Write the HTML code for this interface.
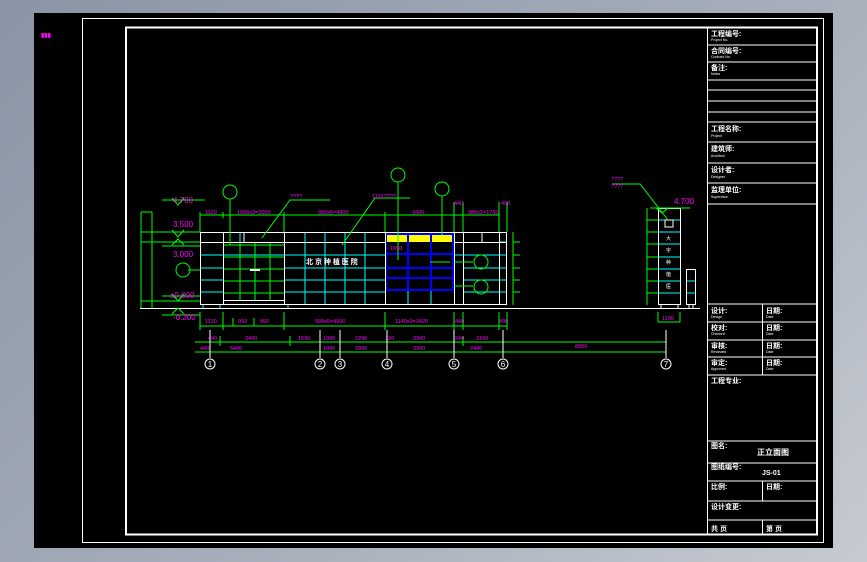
<!DOCTYPE html><html><head><meta charset="utf-8"><style>
html,body{margin:0;padding:0}
body{width:867px;height:562px;background:linear-gradient(135deg,#8a94a4,#a8b0bc 60%,#c6cad2);overflow:hidden}
svg{position:absolute;left:0;top:0}
text{font-family:"Liberation Sans","Noto Sans CJK SC",sans-serif}
</style></head><body>
<svg width="867" height="562" viewBox="0 0 867 562">
<rect x="34" y="13" width="799" height="535" fill="#000"/>
<rect x="82.5" y="18.5" width="741" height="524" fill="none" stroke="#fff" stroke-width="1"/>
<rect x="126" y="27.5" width="691" height="507" fill="none" stroke="#fff" stroke-width="2"/>
<text x="41" y="37" font-size="6" fill="#f0f" font-weight="bold">▮▮▮</text>
<!-- title block -->
<g stroke="#fff" stroke-width="1" fill="none">
<line x1="707.5" y1="27" x2="707.5" y2="534"/>
<path d="M707 45H817M707 62H817M707 80H817M707 90H817M707 101H817M707 112H817M707 122H817M707 142H817M707 163H817M707 183H817M707 204H817M707 304H817M707 322H817M707 340H817M707 357H817M707 375H817M707 441H817M707 463H817M707 481H817M707 501H817M707 520H817"/>
<path d="M762.5 304V375M762.5 481V501M762.5 520V534"/>
</g>
<g fill="#fff" font-size="7" font-weight="bold">
<text x="711" y="36">工程编号:</text><text x="711" y="53">合同编号:</text><text x="711" y="70">备注:</text>
<text x="711" y="131">工程名称:</text><text x="711" y="151">建筑师:</text><text x="711" y="172">设计者:</text><text x="711" y="192">监理单位:</text>
<text x="711" y="313">设计:</text><text x="766" y="313">日期:</text>
<text x="711" y="330">校对:</text><text x="766" y="330">日期:</text>
<text x="711" y="348">审核:</text><text x="766" y="348">日期:</text>
<text x="711" y="365">审定:</text><text x="766" y="365">日期:</text>
<text x="711" y="383">工程专业:</text>
<text x="711" y="448">图名:</text><text x="757" y="455" font-size="8">正立面图</text>
<text x="711" y="469">图纸编号:</text><text x="762" y="475">JS-01</text>
<text x="711" y="489">比例:</text><text x="766" y="489">日期:</text>
<text x="711" y="509">设计变更:</text>
<text x="711" y="531">共 页</text><text x="766" y="531">第 页</text>
</g>
<g fill="#fff" font-size="3.5">
<text x="711" y="41">Project No.</text><text x="711" y="58">Contract No.</text><text x="711" y="75">Notes</text>
<text x="711" y="137">Project</text><text x="711" y="157">Architect</text><text x="711" y="178">Designer</text><text x="711" y="198">Supervisor</text>
<text x="711" y="318">Design</text><text x="711" y="335">Checked</text><text x="711" y="353">Reviewed</text><text x="711" y="370">Approved</text>
<text x="766" y="318">Date</text><text x="766" y="335">Date</text><text x="766" y="353">Date</text><text x="766" y="370">Date</text>
</g>
<!-- ground -->
<line x1="140" y1="308.5" x2="700" y2="308.5" stroke="#fff"/>
<!-- main building -->
<g stroke="#0ff" stroke-width="1">
<path d="M305 232V305M325 232V305M345 232V305M365 232V305M408 290V305M431 290V305M200 255H284M200 268H223M200 280H223M200 292H223M284 255H385M284 268H385M284 280H385M284 292H385M454 255H507M463 268H507M463 280H507M463 292H507M499 242H507"/>
<path d="M240 242V232M203 305V308M220 305V308M288 305V308"/>
</g>
<g stroke="#0f0" stroke-width="1">
<path d="M223 245H284M223 257H284M223 269H284M223 281H284M223 293H284M240 242V300M255 242V300M270 242V300"/>
</g>
<rect x="385" y="233" width="69" height="9" fill="#ff0"/>
<g stroke="#00f" stroke-width="2" fill="none">
<rect x="386" y="234" width="67" height="56"/>
<path d="M408 234V290M431 234V290M386 254H453M386 268H453M386 278H453"/>
</g>
<g stroke="#fff" stroke-width="1" fill="none">
<rect x="200.5" y="232.5" width="306" height="72"/>
<path d="M223.5 232V305M284.5 232V305M385.5 232V305M454.5 232V305M463.5 232V305M499.5 232V305M200 242.5H385M454 242.5H507M244 232V242M482 232V242M223 300.5H284"/>
</g>
<text x="306" y="264" font-size="7" fill="#fff" font-weight="bold">北 京 种 植 医 院</text>
<rect x="250" y="269" width="10" height="2" fill="#fff"/>
<!-- right tower -->
<g stroke="#0ff"><path d="M658 220H680M658 232H680M658 244H680M658 257H680M658 269H680M658 281H680M658 293H680M686 281H695M686 293H695"/></g>
<g stroke="#fff" fill="none"><rect x="658.5" y="208.5" width="22" height="96"/><rect x="686.5" y="269.5" width="9" height="35"/><rect x="665" y="220" width="8" height="7"/><path d="M661 305V308M678 305V308M689 305V308M693 305V308"/></g>
<g fill="#fff" font-size="5"><text x="666" y="240">大</text><text x="666" y="252">宇</text><text x="666" y="264">种</text><text x="666" y="276">植</text><text x="666" y="288">医</text></g>
<!-- green dims -->
<g stroke="#0f0" stroke-width="1" fill="none">
<path d="M200 215H499M200 212V232M223 212V218M284 212V232M385 212V232M454 202V232M463 202V232M499 202V232M507 202V232"/>
<path d="M200 326H507M200 312V330M223 312V330M233 318V326M254 318V326M284 312V330M385 312V330M454 312V330M463 312V330M499 312V330M507 312V330M658 312V322M680 312V322M658 322H680"/>
<path d="M195 342H666M195 352H666M210 336V346M220 336V346M290 336V346M320 336V346M340 336V346M387 336V346M454 336V346M463 336V346M503 336V346"/>
<path d="M141 212V308M152 212V308M141 212H152M141 232H200M141 242H200M141 301H200M513 232V305M513 242H520M513 255H520M513 268H520M513 280H520M513 292H520M647 208V305M647 220H658M647 232H658M647 244H658M647 257H658M647 269H658M647 281H658M647 293H658"/>
<path d="M162 200H205M162 232H200M162 246H200M162 296H200M162 315H200M172 198L178 205L184 198M172 230L178 237L184 230M172 245L178 239L184 245M172 294L178 301L184 294M172 314L178 308L184 314M656 208L662 213L668 208M650 208H690"/>
<path d="M230 199V245M398 182V260M442 196V235M188 270H200M454 262H473M454 286H473M430 262H450M262 238L290 200H330M342 245L375 198H410M612 184H640L668 220"/>
</g>
<g stroke="#0f0" fill="none"><circle cx="230" cy="192" r="7"/><circle cx="398" cy="175" r="7"/><circle cx="442" cy="189" r="7"/><circle cx="183" cy="270" r="7"/><circle cx="481" cy="262" r="7"/><circle cx="481" cy="287" r="7"/></g>
<g fill="#f0f" font-size="8"><text x="173" y="203">4.700</text><text x="173" y="227">3.500</text><text x="173" y="257">3.000</text><text x="170" y="298">±0.000</text><text x="173" y="320">-0.200</text><text x="674" y="204">4.700</text></g>
<g fill="#f0f" font-size="5.5">
<text x="205" y="214">1120</text><text x="237" y="214">1000x3=3000</text><text x="318" y="214">980x5=4900</text><text x="412" y="214">3420</text><text x="468" y="214">980x2=1760</text><text x="454" y="205">440</text><text x="501" y="205">400</text>
<text x="205" y="323">1120</text><text x="238" y="323">992</text><text x="260" y="323">992</text><text x="315" y="323">980x5=4900</text><text x="395" y="323">1140x3=3420</text><text x="455" y="323">440</text><text x="499" y="323">400</text><text x="662" y="320">1100</text>
<text x="208" y="340">490</text><text x="245" y="340">3400</text><text x="298" y="340">1530</text><text x="323" y="340">1000</text><text x="355" y="340">2290</text><text x="385" y="340">120</text><text x="413" y="340">3300</text><text x="455" y="340">240</text><text x="476" y="340">2160</text><text x="575" y="348">8000</text>
<text x="200" y="350">440</text><text x="230" y="350">5400</text><text x="323" y="350">1000</text><text x="355" y="350">2300</text><text x="413" y="350">3300</text><text x="470" y="350">2400</text>
<text x="290" y="198">????</text><text x="372" y="198">1122????</text><text x="611" y="181">????</text><text x="611" y="188">????</text><text x="390" y="250">1050</text>
</g>
<g stroke="#fff" fill="none"><path d="M210 330V358M320 330V358M340 330V358M387 330V358M454 330V358M503 330V358M666 330V358"/>
<circle cx="210" cy="364" r="5"/><circle cx="320" cy="364" r="5"/><circle cx="340" cy="364" r="5"/><circle cx="387" cy="364" r="5"/><circle cx="454" cy="364" r="5"/><circle cx="503" cy="364" r="5"/><circle cx="666" cy="364" r="5"/></g>
<g fill="#fff" font-size="8" text-anchor="middle"><text x="210" y="367">1</text><text x="320" y="367">2</text><text x="340" y="367">3</text><text x="387" y="367">4</text><text x="454" y="367">5</text><text x="503" y="367">6</text><text x="666" y="367">7</text></g>
</svg></body></html>
